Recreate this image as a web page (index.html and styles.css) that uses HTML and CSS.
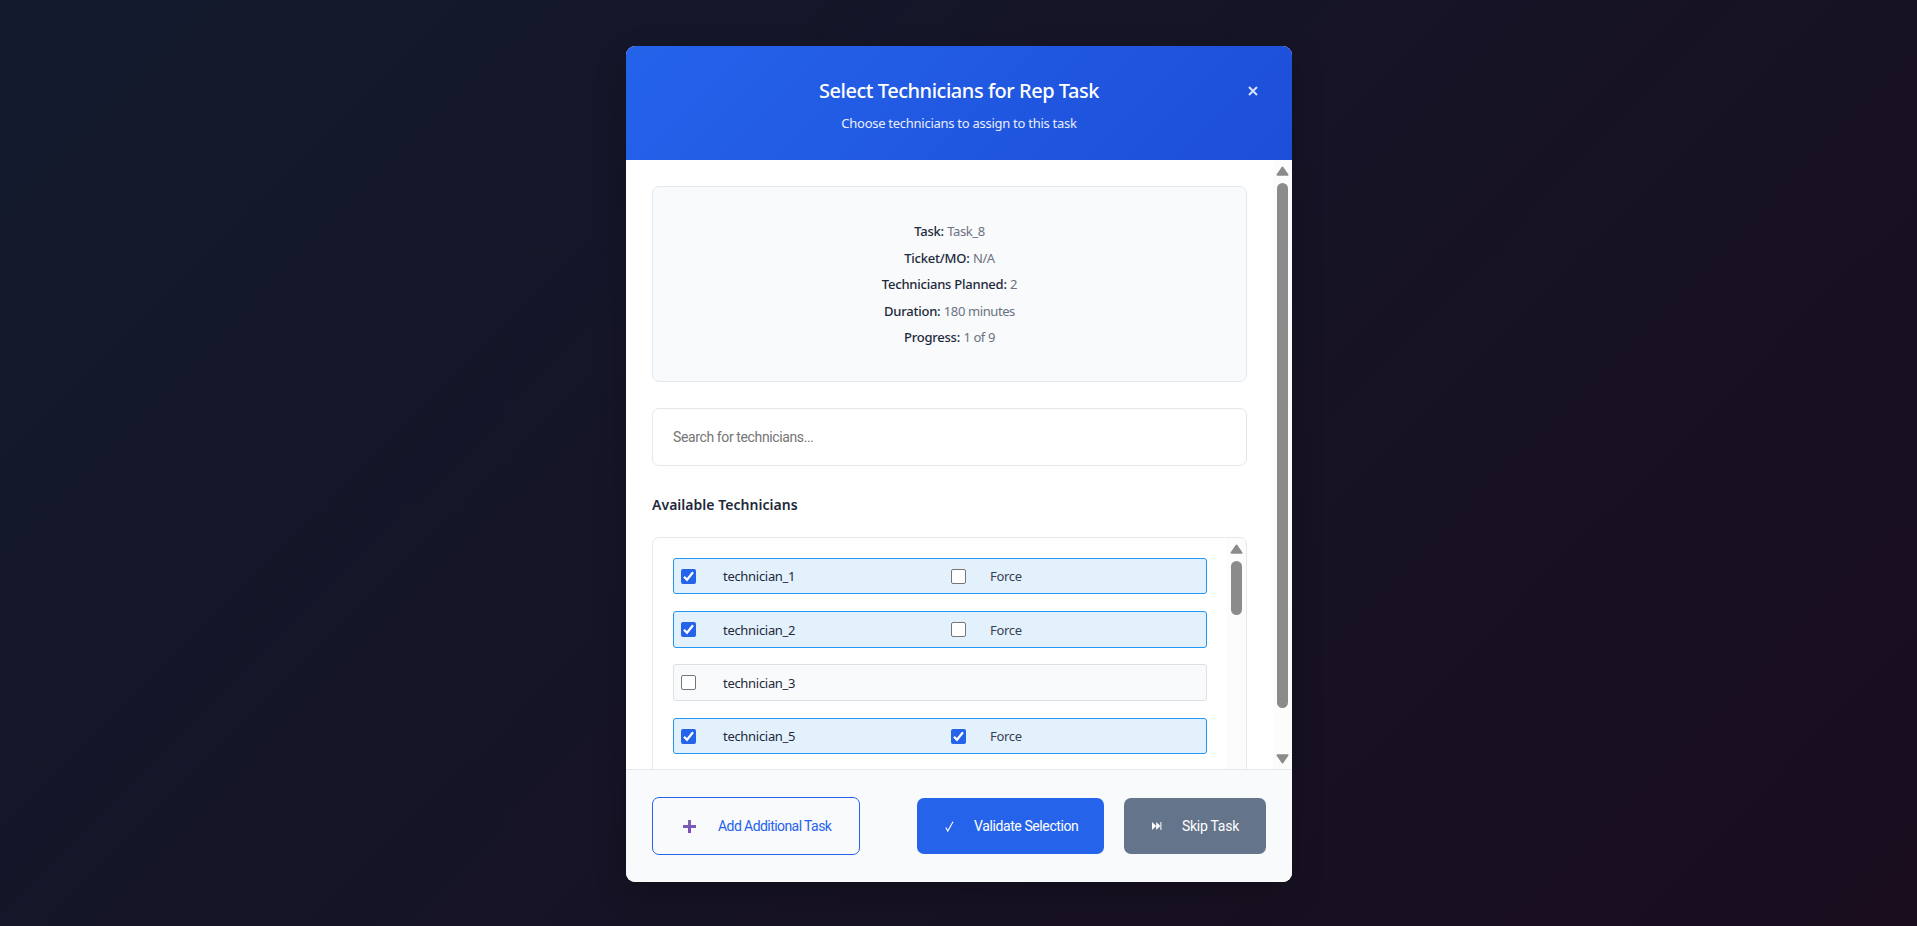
FILE: index.html
```html
<!DOCTYPE html>
<html lang="en">
<head>
<meta charset="utf-8">
<title>Select Technicians</title>
<link rel="stylesheet" href="styles.css">
</head>
<body>
<div class="modal">
  <header class="head">
    <h1 class="title">Select Technicians for Rep Task</h1>
    <p class="subtitle">Choose technicians to assign to this task</p>
    <button class="close" aria-label="Close"><svg width="10" height="10" viewBox="0 0 10 10"><path d="M1 1l8 8M9 1L1 9"/></svg></button>
  </header>
  <div class="body">
    <main class="content">
      <section class="info">
        <p><b>Task:</b> <span>Task_8</span></p>
        <p><b>Ticket/MO:</b> <span>N/A</span></p>
        <p><b>Technicians Planned:</b> <span>2</span></p>
        <p><b>Duration:</b> <span>180 minutes</span></p>
        <p><b>Progress:</b> <span>1 of 9</span></p>
      </section>
      <input class="search" placeholder="Search for technicians...">
      <h2 class="label">Available Technicians</h2>
      <section class="list">
        <div class="rows">
          <div class="row on"><i class="box checked"><svg viewBox="0 0 15 15"><path d="M3 7.8l3 3L12 3.2"/></svg></i><span class="name">technician_1</span><i class="box"></i><span class="force">Force</span></div>
          <div class="row on tall tight"><i class="box checked"><svg viewBox="0 0 15 15"><path d="M3 7.8l3 3L12 3.2"/></svg></i><span class="name">technician_2</span><i class="box"></i><span class="force">Force</span></div>
          <div class="row tall"><i class="box"></i><span class="name">technician_3</span></div>
          <div class="row on"><i class="box checked"><svg viewBox="0 0 15 15"><path d="M3 7.8l3 3L12 3.2"/></svg></i><span class="name">technician_5</span><i class="box checked"><svg viewBox="0 0 15 15"><path d="M3 7.8l3 3L12 3.2"/></svg></i><span class="force">Force</span></div>
        </div>
        <div class="bar inner">
          <svg class="arrow" viewBox="0 0 13 10"><path d="M6.5 1.5L11.5 8.8H1.5Z"/></svg>
          <div class="thumb"></div>
        </div>
      </section>
    </main>
    <div class="bar outer">
      <svg class="arrow" viewBox="0 0 13 10"><path d="M6.5 1.5L11.5 8.8H1.5Z"/></svg>
      <div class="thumb"></div>
      <svg class="arrow down" viewBox="0 0 13 10"><path d="M6.5 8.5L11.5 1.2H1.5Z"/></svg>
    </div>
  </div>
  <footer class="foot">
    <button class="btn add"><svg width="13" height="13" viewBox="0 0 13 13"><defs><linearGradient id="g" x1="0" y1="0" x2="0" y2="1"><stop offset="0" stop-color="#7a6aa8"/><stop offset="1" stop-color="#7f45c8"/></linearGradient></defs><path fill="url(#g)" d="M5 0h3v5h5v3H8v5H5V8H0V5h5z"/></svg><span>Add Additional Task</span></button>
    <button class="btn validate"><svg width="9" height="11" viewBox="0 0 9 11"><path d="M.8 6.5l2 3.6L8 .8" fill="none" stroke="#fff" stroke-width="1.1"/></svg><span>Validate Selection</span></button>
    <button class="btn skip"><svg width="10" height="8" viewBox="0 0 10 8"><path d="M0 0l4.2 4L0 8zM4.2 0l4.2 4-4.2 4zM8.4 0H9.4v8H8.4z" fill="#fff"/></svg><span>Skip Task</span></button>
  </footer>
</div>
</body>
</html>
```
FILE: styles.css
```css
* { box-sizing: border-box; }
body {
  margin: 0; height: 926px; overflow: hidden; padding-top: 46px;
  background: linear-gradient(135deg, #131a2d 0%, #161426 50%, #190d1e 100%);
  font-family: "Noto Sans", "Open Sans", sans-serif; font-size: 13px; color: #1e293b;
}
h1, h2, p { margin: 0; font-weight: 400; }
button { font: inherit; border: 0; }
.modal {
  width: 666px; height: 836px; margin-left: 626px; display: flex; flex-direction: column;
  border-radius: 9px; overflow: hidden; background: #fff; box-shadow: 0 12px 32px rgba(0,0,0,.22);
}
.head {
  position: relative; height: 114px; padding-top: 30px; text-align: center; color: #fff;
  background: linear-gradient(135deg, #2563eb, #1d4ed8);
}
.title { font-size: 20px; line-height: 30px; font-weight: 500; letter-spacing: -.47px; }
.subtitle { font-size: 13px; line-height: 20px; margin-top: 7px; opacity: .9; letter-spacing: -.27px; }
.close { position: absolute; right: 34px; top: 40px; width: 10px; height: 10px; padding: 0; background: none; display: block; }
.close svg { display: block; fill: none; stroke: #d7e1fa; stroke-width: 2; }
.body { height: 609px; display: flex; overflow: hidden; }
.content { width: 647px; padding: 26px 26px 0; }
.info {
  height: 196px; padding-top: 31px; text-align: center; line-height: 26.6px;
  border: 1px solid #e2e8f0; border-radius: 7px; background: #f8fafc;
}
.info b { font-weight: 500; letter-spacing: -.23px; }
.info span { color: #6b7280; letter-spacing: -.4px; }
.search {
  display: block; width: 595px; height: 58px; margin-top: 26px; padding: 0 20px;
  border: 1px solid #e5e7eb; border-radius: 7px; background: #fff; font: 14px Roboto, sans-serif; letter-spacing: -.38px; outline: 0;
}
.search::placeholder { color: #757575; }
.label { margin-top: 27px; font-size: 14px; line-height: 24px; font-weight: 600; letter-spacing: .03px; }
.list {
  height: 260px; margin-top: 20px; display: flex; border: 1px solid #e5e7eb; border-radius: 7px; overflow: hidden;
}
.rows { width: 574px; padding: 20px; display: flex; flex-direction: column; gap: 17px; }
.row {
  height: 36px; flex: none; display: flex; align-items: center; padding-left: 7px; letter-spacing: -.3px;
  border: 1px solid #dcdfe3; border-radius: 3px; background: #f9fafc;
}
.tall { height: 37px; }
.tight { margin-bottom: -1px; }
.on { background: #e3f1fd; border-color: #2196f3; }
.box { width: 15px; height: 15px; border: 1px solid #767676; border-radius: 2px; background: #fff; flex: none; }
.box.checked { border: 0; background: #2563eb; }
.box svg { display: block; fill: none; stroke: #fff; stroke-width: 2.2; }
.name { width: 228px; margin-left: 27px; }
.force { margin-left: 24px; color: #374151; }
.bar { width: 19px; background: #fcfcfc; display: flex; flex-direction: column; align-items: center; flex: none; padding-top: 6px; }
.arrow { width: 13px; height: 10px; flex: none; fill: #8b8b8b; stroke: #8b8b8b; stroke-width: 2; stroke-linejoin: round; }
.thumb { width: 11px; border-radius: 6px; background: #8b8b8b; margin-top: 7px; flex: none; }
.inner .thumb { height: 54px; }
.outer .thumb { height: 525px; }
.down { margin-top: 46px; }
.foot {
  height: 113px; padding: 27px 26px 0; display: flex; align-items: flex-start;
  border-top: 1px solid #e5e7eb; background: #f8fafc; font-family: Roboto, sans-serif; font-size: 14px;
}
.btn { display: flex; align-items: center; border-radius: 7px; height: 56px; padding: 0; color: #fff; white-space: nowrap; margin-top: 1px; }
.add { width: 208px; height: 58px; margin-top: 0; padding-left: 30px; gap: 22px; border: 1px solid #2563eb; background: #f8fafc; color: #2563eb; letter-spacing: -.57px; }
.validate { width: 187px; margin-left: 57px; padding-left: 28px; gap: 20px; background: #2563eb; letter-spacing: -.4px; }
.skip { width: 142px; margin-left: 20px; padding-left: 28px; gap: 20px; background: #64748b; letter-spacing: -.27px; }
```
